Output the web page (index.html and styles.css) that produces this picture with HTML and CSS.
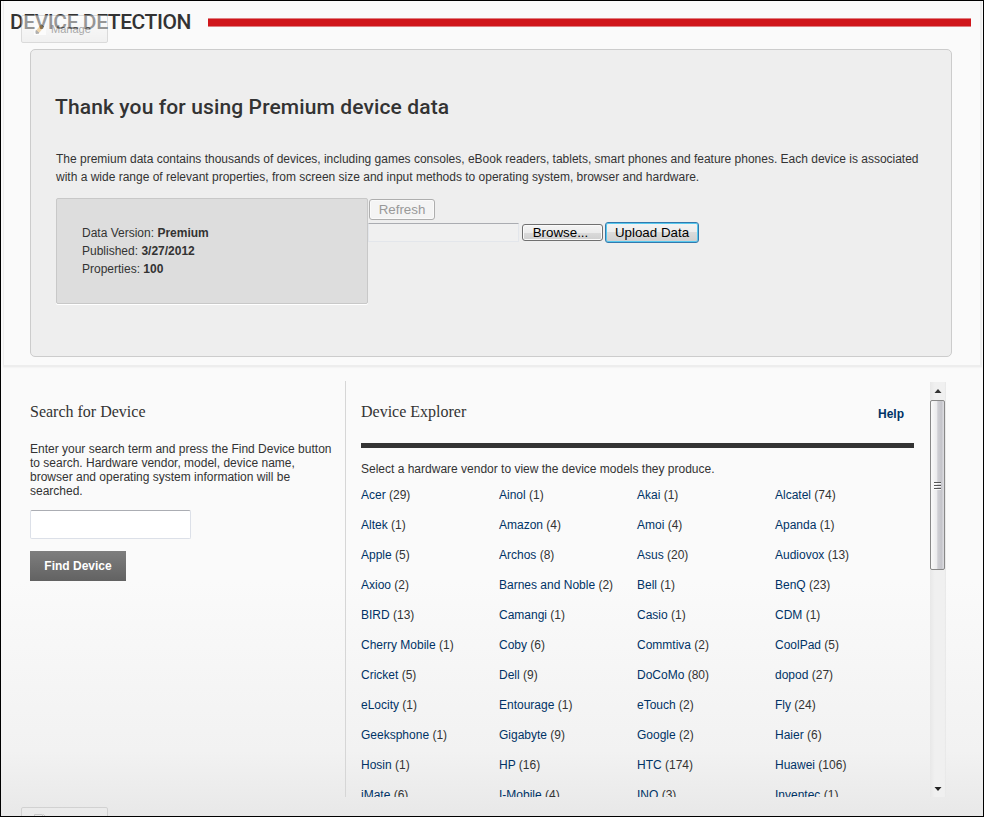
FILE: index.html
```html
<!DOCTYPE html>
<html lang="en">
<head>
<meta charset="utf-8">
<title>Device Detection</title>
<link rel="stylesheet" href="styles.css">
</head>
<body>
<div class="frame">
  <section class="module">
    <header class="title-bar">
      <h1>DEVICE DETECTION</h1>
      <div class="title-rule"></div>
    </header>
    <div class="manage">
      <svg class="pencil" width="12" height="12" viewBox="0 0 12 12"><rect width="12" height="12" fill="#fff"/><path d="M2 7.500 7 1.500l3 2.500-5 6L2 10.500z" fill="#e0b062"/><path d="M2 7.500 5 10l-3 .5zM7 1.500l3 2.500" fill="#666" stroke="#666"/></svg>
      <span>Manage</span>
    </div>
    <div class="card">
      <h2>Thank you for using Premium device data</h2>
      <p class="intro">The premium data contains thousands of devices, including games consoles, eBook readers, tablets, smart phones and feature phones. Each device is associated<br>with a wide range of relevant properties, from screen size and input methods to operating system, browser and hardware.</p>
      <div class="data-row">
        <div class="info">
          <div>Data Version: <b>Premium</b></div>
          <div>Published: <b>3/27/2012</b></div>
          <div>Properties: <b>100</b></div>
        </div>
        <div class="controls">
          <button class="btn refresh" disabled>Refresh</button>
          <div class="upload">
            <div class="file-field"></div>
            <button class="btn browse">Browse...</button>
            <button class="btn send">Upload Data</button>
          </div>
        </div>
      </div>
    </div>
  </section>
  <div class="lower">
    <aside class="search">
      <h3>Search for Device</h3>
      <p>Enter your search term and press the Find Device button<br>to search. Hardware vendor, model, device name,<br>browser and operating system information will be<br>searched.</p>
      <input class="term" type="text" aria-label="Search term">
      <button class="find">Find Device</button>
    </aside>
    <main class="explorer">
      <div class="explorer-head"><h3>Device Explorer</h3><a class="help">Help</a></div>
      <p class="hint">Select a hardware vendor to view the device models they produce.</p>
      <div class="vendors">
        <div><a>Acer</a> (29)</div><div><a>Ainol</a> (1)</div><div><a>Akai</a> (1)</div><div><a>Alcatel</a> (74)</div>
        <div><a>Altek</a> (1)</div><div><a>Amazon</a> (4)</div><div><a>Amoi</a> (4)</div><div><a>Apanda</a> (1)</div>
        <div><a>Apple</a> (5)</div><div><a>Archos</a> (8)</div><div><a>Asus</a> (20)</div><div><a>Audiovox</a> (13)</div>
        <div><a>Axioo</a> (2)</div><div><a>Barnes and Noble</a> (2)</div><div><a>Bell</a> (1)</div><div><a>BenQ</a> (23)</div>
        <div><a>BIRD</a> (13)</div><div><a>Camangi</a> (1)</div><div><a>Casio</a> (1)</div><div><a>CDM</a> (1)</div>
        <div><a>Cherry Mobile</a> (1)</div><div><a>Coby</a> (6)</div><div><a>Commtiva</a> (2)</div><div><a>CoolPad</a> (5)</div>
        <div><a>Cricket</a> (5)</div><div><a>Dell</a> (9)</div><div><a>DoCoMo</a> (80)</div><div><a>dopod</a> (27)</div>
        <div><a>eLocity</a> (1)</div><div><a>Entourage</a> (1)</div><div><a>eTouch</a> (2)</div><div><a>Fly</a> (24)</div>
        <div><a>Geeksphone</a> (1)</div><div><a>Gigabyte</a> (9)</div><div><a>Google</a> (2)</div><div><a>Haier</a> (6)</div>
        <div><a>Hosin</a> (1)</div><div><a>HP</a> (16)</div><div><a>HTC</a> (174)</div><div><a>Huawei</a> (106)</div>
        <div><a>iMate</a> (6)</div><div><a>I-Mobile</a> (4)</div><div><a>INQ</a> (3)</div><div><a>Inventec</a> (1)</div>
      </div>
    </main>
    <div class="scrollbar">
      <svg class="arrow" width="16" height="18" viewBox="0 0 16 18"><path d="M8 7 11.500 11h-7z" fill="#333"/></svg>
      <div class="thumb"><svg width="7" height="9" viewBox="0 0 7 9"><path d="M0 1.500h7M0 4.500h7M0 7.500h7" stroke="#555"/><path d="M0 2.500h7M0 5.500h7M0 8.500h7" stroke="#fff" stroke-opacity=".8"/></svg></div>
      <svg class="arrow" width="16" height="18" viewBox="0 0 16 18"><path d="M4.500 8h7L8 12z" fill="#222"/></svg>
    </div>
  </div>
  <div class="manage next"><svg class="pencil" width="12" height="12" viewBox="0 0 12 12"><path d="M.5 11V1.500h8M8 3l1.500-1.500L11 3" fill="none" stroke="#aaa"/></svg></div>
</div>
</body>
</html>
```
FILE: styles.css
```css
* { box-sizing: border-box; }
body {
  margin: 0;
  font: 12px/18px "Liberation Sans", Arial, sans-serif;
  color: #333;
}
h1, h2, h3, p { margin: 0; }
.frame {
  position: relative;
  width: 984px;
  height: 817px;
  border: 1px solid #000;
  overflow: hidden;
  background: linear-gradient(#fafafa 0, #fafafa 580px, #f2f2f2 750px, #e8e8e8 815px);
}
.module {
  height: 366px;
  margin: 0 1px 0 2px;
  border: solid #ededed;
  border-width: 0 2px 2px 1px;
  box-shadow: 0 1px 1px #f4f4f4;
  padding-left: 26px;
}
.title-bar {
  display: flex;
  height: 48px;
  margin-left: -20px;
  padding-right: 9px;
}
h1 {
  width: 198px;
  padding-top: 7px;
  font: 500 21px/28px Roboto, sans-serif;
  letter-spacing: -.43px;
  white-space: nowrap;
}
.title-rule {
  flex: 1;
  height: 9px;
  margin-top: 17px;
  background: #d0161b;
  border: solid #df7f82;
  border-width: 1px 0;
}
.manage {
  position: absolute;
  left: 20px;
  top: 14px;
  width: 87px;
  height: 28px;
  display: flex;
  align-items: center;
  gap: 5px;
  padding-left: 12px;
  border: 1px solid #bbb;
  border-radius: 2px;
  background: linear-gradient(#fff, #e8e8e8);
  font-size: 11px;
  color: #555;
  opacity: .5;
}
.manage.next { top: 806px; background: #ededed; align-items: flex-start; padding-top: 5px; }
.card {
  width: 922px;
  height: 308px;
  border: 1px solid #ccc;
  border-radius: 5px;
  background: #eee;
  padding: 42px 25px 0 24px;
}
h2 {
  font: 500 21px/30px Roboto, sans-serif;
  letter-spacing: .12px;
  white-space: nowrap;
}
.intro { margin: 28px 0 0 1px; white-space: nowrap; letter-spacing: -.004px; }
.data-row { display: flex; margin: 12px 0 0 1px; }
.info {
  width: 312px;
  height: 106px;
  padding: 25px;
  background: #ddd;
  border: 1px solid #c8c8c8;
  border-radius: 2px;
  box-shadow: 0 1px 0 #fff;
}
.controls { padding: 1px 0 0 1px; }
.btn {
  display: block;
  margin: 0;
  padding: 0;
  font: 13.33px/15px "Liberation Sans", Arial, sans-serif;
  color: #000;
  border: 1px solid #707070;
  border-radius: 3px;
  background: linear-gradient(#f4f4f4 0, #ececec 50%, #dbdbdb 50%, #cfcfcf);
  box-shadow: inset 0 0 0 1px #fafafa;
}
.refresh { width: 66px; height: 21px; color: #999; border-color: #aeaeae; background: #f4f4f4; }
.upload { display: flex; align-items: center; height: 21px; margin-top: 2px; }
.file-field { width: 151px; height: 19px; border: 1px solid #e3e6eb; border-top-color: #aaacb1; margin-left: -1px; margin-right: 3px; background: #f0f0f0; }
.browse { width: 81px; height: 17px; margin-right: 2px; padding-right: 4px; }
.send { width: 94px; height: 21px; border-color: #3279ad; box-shadow: inset 0 0 0 1px #57c8ee; }
.lower { display: flex; height: 416px; margin-top: 14px; }
.search {
  width: 345px;
  padding: 21px 0 0 29px;
  border-right: 1px solid #d6d6d6;
}
h3 { font: 16px/20px "Liberation Serif", "Times New Roman", serif; }
.search p { margin-top: 20px; line-height: 14px; white-space: nowrap; }
.term {
  display: block;
  width: 161px;
  height: 29px;
  margin: 12px 0;
  border: 1px solid #dce0e8;
  border-top-color: #abadb3;
  border-radius: 2px;
  background: #fff;
}
.find {
  display: block;
  width: 96px;
  height: 30px;
  border: 0;
  padding: 0;
  background: linear-gradient(#7e7e7e, #626262);
  color: #fff;
  font: bold 12px/18px "Liberation Sans", Arial, sans-serif;
}
.explorer {
  width: 569px;
  padding: 21px 0 0 15px;
  overflow: hidden;
}
.explorer-head {
  display: flex;
  justify-content: space-between;
  width: 553px;
  height: 46px;
  padding-right: 10px;
  border-bottom: 5px solid #333;
}
.help { font-weight: bold; color: #036; padding-top: 3px; }
.hint { margin-top: 12px; }
.vendors {
  display: grid;
  grid-template-columns: repeat(4, 138px);
  grid-auto-rows: 30px;
  margin-top: 8px;
}
.vendors a { color: #036; }
.scrollbar {
  display: flex;
  flex-direction: column;
  width: 16px;
  margin: 1px 0 0 15px;
  background: linear-gradient(90deg, #e8e8e8, #f0f0f0 30%, #f0f0f0 90%, #e6e6e6);
}
.arrow { display: block; flex: none; }
.arrow:last-child { margin-top: auto; }
.thumb {
  width: 15px;
  height: 170px;
  display: flex;
  align-items: center;
  justify-content: center;
  border: 1px solid #888;
  border-radius: 2px;
  background: linear-gradient(90deg, #fafafa, #ebebed 45%, #cfcfd4 52%, #c5c5cb 80%, #dedee2);
}
```
